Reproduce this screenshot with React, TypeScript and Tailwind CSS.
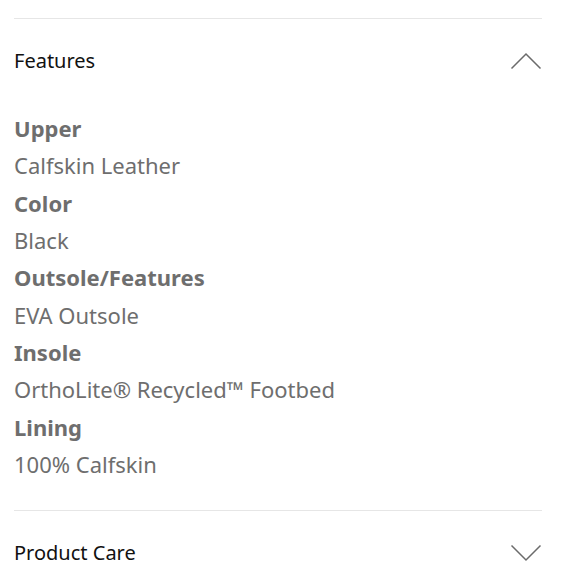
import { useState } from 'react'

const specs = [
  { label: 'Upper', value: 'Calfskin Leather' },
  { label: 'Color', value: 'Black' },
  { label: 'Outsole/Features', value: 'EVA Outsole' },
  { label: 'Insole', value: 'OrthoLite® Recycled™ Footbed' },
  { label: 'Lining', value: '100% Calfskin' },
]

function Chevron({ up }: { up: boolean }) {
  return (
    <svg width="32" height="18" viewBox="0 0 32 18" fill="none" className="text-[#6b6b6b]">
      <path
        d={up ? 'M1.5 16.5L16 2l14.5 14.5' : 'M1.5 1.5L16 16l14.5-14.5'}
        stroke="currentColor"
        strokeWidth="1.5"
      />
    </svg>
  )
}

export default function App() {
  const [featuresOpen, setFeaturesOpen] = useState(true)
  const [careOpen, setCareOpen] = useState(false)

  return (
    <div className="w-[580px] h-[580px] overflow-hidden bg-white pt-[18px] pl-[14px] pr-[38px]" style={{ fontFamily: '"Noto Sans", "Open Sans", sans-serif' }}>
      <div className="border-t border-[#e6e6e6]">
        <button
          onClick={() => setFeaturesOpen(o => !o)}
          className="w-full flex items-center justify-between h-[84px] text-left"
        >
          <span className="text-[20px] text-[#111]">Features</span>
          <Chevron up={featuresOpen} />
        </button>

        {featuresOpen && (
          <div className="pb-[27px] mt-[7px] text-[22px] leading-[37.33px] text-[#6e6e6e]">
            {specs.map(s => (
              <div key={s.label}>
                <div className="font-bold">{s.label}</div>
                <div>{s.value}</div>
              </div>
            ))}
          </div>
        )}
      </div>

      <div className="border-t border-[#e6e6e6]">
        <button
          onClick={() => setCareOpen(o => !o)}
          className="w-full flex items-center justify-between h-[84px] text-left"
        >
          <span className="text-[20px] text-[#111]">Product Care</span>
          <Chevron up={careOpen} />
        </button>
      </div>
    </div>
  )
}
